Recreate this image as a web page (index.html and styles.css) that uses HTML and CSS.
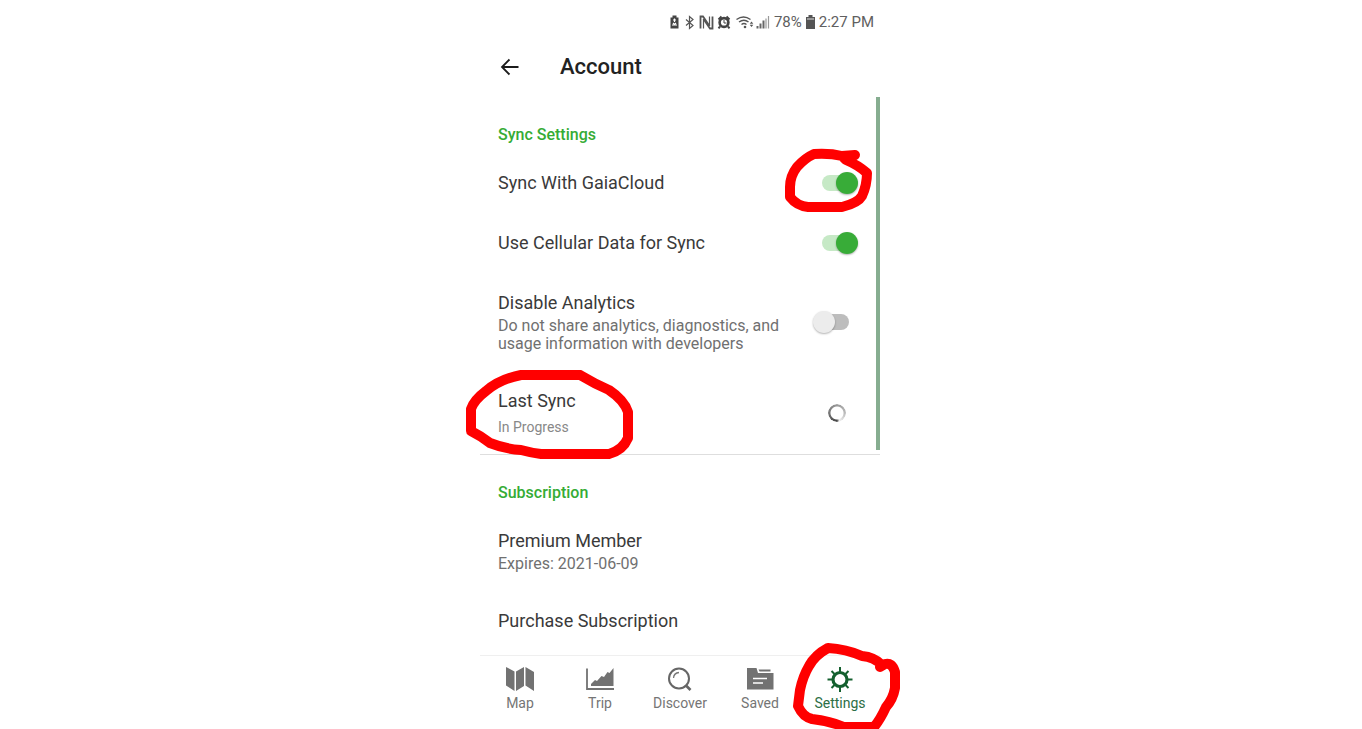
FILE: index.html
```html
<!DOCTYPE html>
<html lang="en">
<head>
<meta charset="utf-8">
<title>Account</title>
<meta name="viewport" content="width=device-width, initial-scale=1">
<link rel="stylesheet" href="styles.css">
</head>
<body>
<div class="phone">
  <div class="status">
    <svg class="status-icons" width="101" height="16" viewBox="670 13 101 16" aria-hidden="true">
      <path d="M671.500 16.500h2v-2h4v2h2v11h-8z" fill="#444"/>
      <path d="M675.500 17.500v3.500m-1.500-2h3M673 24h5m-4-2l1.500 1.500 1.500-1.500" stroke="#fff" stroke-width="1.200" fill="none"/>
      <path d="M687 18.500l7 6-3.500 3v-12l3.500 3-7 6" fill="none" stroke="#555" stroke-width="1.200"/>
      <path d="M701.500 27.500v-12h2.500l6.500 9.500M713.500 15.500v12h-2.500l-6.500-9.500" fill="none" stroke="#555" stroke-width="1.800"/>
      <path d="M704.500 18v9.500M710.500 15.500v9.500" stroke="#555" stroke-width="1.200"/>
      <circle cx="725" cy="21.500" r="4.400" fill="none" stroke="#444" stroke-width="2.600"/>
      <path d="M719.500 18.500l3-3M730.500 18.500l-3-3M721 25.500l-1.500 1.800M729 25.500l1.500 1.800" stroke="#444" stroke-width="2"/>
      <path d="M725 19v3h2.500" fill="none" stroke="#444"/>
      <path d="M737.500 18.500q7-5 14 0M740 21q5-3.500 9.500 0M742.500 23.500q2.500-1.800 5 0" fill="none" stroke="#555" stroke-width="1.500"/>
      <circle cx="746" cy="26" r="1.300" fill="#555"/>
      <path d="M752.500 20.500l1.800 2.200h-3.600zM752.500 26l1.800-2.200h-3.600z" fill="#555"/>
      <path d="M758.500 27.500v-2.500M761.500 27.500v-5M764.500 27.500v-8" stroke="#666" stroke-width="2"/>
      <path d="M767 27.500v-10M769.500 27.500v-12.500" stroke="#999" stroke-width="1.200"/>
    </svg>
    <span>78%</span>
    <svg width="9" height="14" viewBox="0 0 9 14" aria-hidden="true"><path d="M0 2h2.500V0h4v2H9v12H0z" fill="#555"/><path d="M1 3h7v2H1z" fill="#999"/></svg>
    <span>2:27 PM</span>
  </div>

  <header class="header">
    <button class="back" type="button" aria-label="Back">
      <svg width="20" height="18" viewBox="0 0 20 18"><path d="M18.500 9H2M9.500 1.500L2 9l7.500 7.500" fill="none" stroke="#1c1c1c" stroke-width="1.800"/></svg>
    </button>
    <h1 class="title">Account</h1>
  </header>

  <main class="content">
    <section class="section section-sync">
      <h2 class="section-title">Sync Settings</h2>
      <div class="row">
        <label class="row-title" for="gaia">Sync With GaiaCloud</label>
        <input class="toggle" type="checkbox" id="gaia" checked>
      </div>
      <div class="row">
        <label class="row-title" for="cell">Use Cellular Data for Sync</label>
        <input class="toggle" type="checkbox" id="cell" checked>
      </div>
      <div class="row">
        <div class="row-text">
          <label class="row-title" for="analytics">Disable Analytics</label>
          <p class="row-desc">Do not share analytics, diagnostics, and usage information with developers</p>
        </div>
        <input class="toggle" type="checkbox" id="analytics">
      </div>
      <div class="row">
        <div class="row-text row-text-loose">
          <div class="row-title">Last Sync</div>
          <p class="row-note">In Progress</p>
        </div>
        <span class="spinner" role="status" aria-label="Syncing"></span>
      </div>
    </section>

    <section class="section">
      <h2 class="section-title">Subscription</h2>
      <div class="row">
        <div class="row-text">
          <div class="row-title">Premium Member</div>
          <p class="row-desc">Expires: 2021-06-09</p>
        </div>
      </div>
      <div class="row">
        <a class="row-title" href="#purchase">Purchase Subscription</a>
      </div>
    </section>
  </main>

  <nav class="nav">
    <a class="nav-item" href="#map">
      <svg width="28" height="26" viewBox="0 0 28 26"><path d="M0 1l8.500 4.500V25L0 19.500zM10 5.500L18 1v19l-8 5zM19.500 1L28 6v19l-8.500-5.500z" fill="#727272"/></svg>
      <span>Map</span>
    </a>
    <a class="nav-item" href="#trip">
      <svg width="28" height="26" viewBox="0 0 28 26"><path d="M1 2.500v20.500h27" fill="none" stroke="#727272" stroke-width="1.800"/><path d="M5 20v-2l4-4 2 1 4.500-5 2.500 1 3.500-5 2 1L27.500 2v18z" fill="#727272"/></svg>
      <span>Trip</span>
    </a>
    <a class="nav-item" href="#discover">
      <svg width="28" height="26" viewBox="0 0 28 26"><circle cx="13" cy="12.500" r="10" fill="none" stroke="#666" stroke-width="2"/><path d="M7.500 12A6 6 0 0 1 13 6.500" fill="none" stroke="#777" stroke-width="1.300"/><path d="M19.500 19l5 5" stroke="#666" stroke-width="2.600"/></svg>
      <span>Discover</span>
    </a>
    <a class="nav-item" href="#saved">
      <svg width="28" height="26" viewBox="0 0 28 26"><path d="M1 2h9.500l1.500 5h15.500v16.500H1z" fill="#727272"/><path d="M12.500 3.500h12v2h-11z" fill="#727272"/><path d="M7 12.500h14M7 17h10" stroke="#fff" stroke-width="1.600"/></svg>
      <span>Saved</span>
    </a>
    <a class="nav-item nav-item-active" href="#settings">
      <svg width="28" height="26" viewBox="0 0 28 26"><circle cx="14" cy="13.500" r="7" fill="none" stroke="#14602f" stroke-width="3.200"/><path d="M14 6V1M14 21v5M6.500 13.500h-5M21.500 13.500h5M8.500 8L5.500 5M19.500 8l3-3M8.500 19l-3 3M19.500 19l3 3" stroke="#14602f" stroke-width="2"/></svg>
      <span>Settings</span>
    </a>
  </nav>

  <svg class="ink" width="450" height="729" viewBox="460 0 450 729" aria-hidden="true">
    <path d="M855 155L842 156Q830 153 814 154Q805 158 797 167Q790 176 790 187V197Q797 206 808 207H842Q858 203 862 196Q867 185 867 173Q858 165 846 160L842 156"/>
    <path d="M580 375H521Q500 379 486 391Q474 400 471 409V431Q481 436 490 443Q505 449 521 450Q532 453 541 454H609Q623 450 628 438V412Q624 400 609 390Q595 384 580 375"/>
    <path d="M882 665Q874 657 862 656Q846 649 828 648Q815 655 809 666Q803 676 800 690L798 706Q803 717 812 719Q830 721 844 727H874Q880 720 886 707Q893 699 895 688V672Q892 662 885 664L880 667"/>
  </svg>
</div>
</body>
</html>
```
FILE: styles.css
```css
* {
  box-sizing: border-box;
}

body {
  margin: 0;
  padding-right: 2px;
  background: #fff;
  color: #3a3a3a;
  font-family: Roboto, "Liberation Sans", sans-serif;
}

h1, h2, p {
  margin: 0;
}

a {
  color: inherit;
  text-decoration: none;
}

.phone {
  position: relative;
  display: flex;
  flex-direction: column;
  max-width: 400px;
  min-height: 100vh;
  margin: 0 auto;
}

.status {
  display: flex;
  align-items: center;
  justify-content: flex-end;
  gap: 4px;
  height: 43px;
  padding-right: 6px;
  color: #606060;
  font-size: 15px;
}

.header {
  display: flex;
  align-items: center;
  gap: 40px;
  height: 47px;
  padding: 0 20px;
}

.back {
  display: flex;
  padding: 0;
  border: 0;
  background: none;
}

.title {
  color: #222;
  font-size: 22px;
  font-weight: 500;
}

.content {
  flex: 1;
  padding-top: 7px;
}

.section {
  padding: 24px 22px 0 18px;
}

.section-sync {
  position: relative;
  border-bottom: 1px solid #dedede;
}

.section-sync::after {
  content: "";
  position: absolute;
  top: 0;
  right: 0;
  bottom: 4px;
  width: 4px;
  background: #86ad90;
}

.section-title {
  margin-bottom: 4px;
  color: #35ac35;
  font-size: 16px;
  font-weight: 500;
  line-height: 28px;
}

.row {
  display: flex;
  align-items: center;
  justify-content: space-between;
  padding: 18px 0;
}

.row-text {
  display: flex;
  flex-direction: column;
  gap: 2px;
  max-width: 290px;
}

.row-text-loose {
  gap: 5px;
}

.row-title {
  font-size: 18px;
  line-height: 24px;
}

.row-desc {
  color: #707070;
  font-size: 16px;
  line-height: 18px;
}

.row-note {
  color: #888;
  font-size: 14px;
  line-height: 18px;
}

.toggle {
  position: relative;
  flex: none;
  width: 45px;
  height: 24px;
  margin: 0;
  appearance: none;
}

.toggle::before {
  content: "";
  position: absolute;
  inset: 4px 9px;
  border-radius: 8px;
  background: #bdbdbd;
}

.toggle::after {
  content: "";
  position: absolute;
  top: 1px;
  left: 0;
  width: 22px;
  height: 22px;
  border-radius: 50%;
  background: #ececec;
  box-shadow: 0 1px 2px rgba(0, 0, 0, 0.3);
}

.toggle:checked::before {
  background: #c6e9c6;
}

.toggle:checked::after {
  left: 23px;
  background: #38ac38;
}

.spinner {
  width: 18px;
  height: 18px;
  margin-right: 12px;
  border-radius: 50%;
  background: conic-gradient(#999, #bbb 25%, #eee 45%, #444 50%, #777 75%, #999);
  mask: radial-gradient(circle, transparent 6px, #000 7px);
}

.nav {
  display: grid;
  grid-template-columns: repeat(5, 1fr);
  height: 74px;
  border-top: 1px solid #efefef;
}

.nav-item {
  display: flex;
  flex-direction: column;
  align-items: center;
  gap: 3px;
  padding-top: 10px;
  color: #757575;
  font-size: 14px;
  line-height: 16px;
}

.nav-item-active {
  color: #2c6e45;
}

.ink {
  position: absolute;
  top: 0;
  left: -20px;
  fill: none;
  stroke: #f00;
  stroke-width: 10px;
  stroke-linecap: round;
  stroke-linejoin: round;
  pointer-events: none;
}
```
